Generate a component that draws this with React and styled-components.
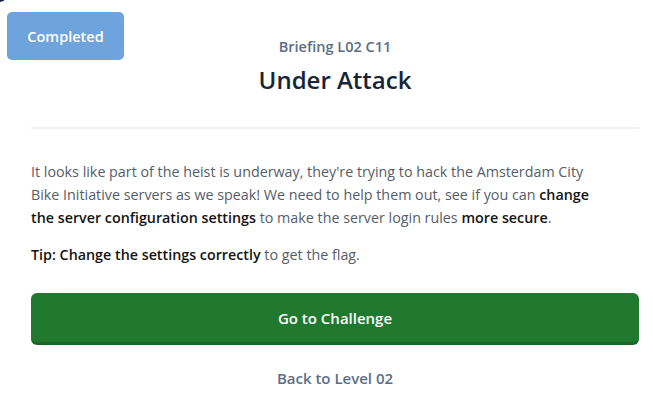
import styled, { createGlobalStyle } from 'styled-components';

const GlobalStyle = createGlobalStyle`
  body {
    margin: 0;
    background: #ffffff;
    font-family: "Open Sans", Lato, sans-serif;
  }
`;

const Page = styled.div`
  position: relative;
  width: 653px;
  height: 411px;
  overflow: hidden;
  background: #ffffff;
`;

const Corner = styled.div`
  position: absolute;
  top: -6px;
  left: -4px;
  width: 10px;
  height: 8px;
  border-radius: 0 0 6px 0;
  background: #1b2a3c;
`;

const CompletedBadge = styled.div`
  position: absolute;
  top: 12px;
  left: 7px;
  display: flex;
  align-items: center;
  justify-content: center;

  width: 117px;
  height: 48px;
  border-radius: 5px;

  background: #6fa3dc;
  color: #ffffff;

  font-size: 14.5px;
  font-weight: 600;
`;

const Content = styled.div`
  display: flex;
  flex-direction: column;
  padding: 37px 14px 0 31px;
`;

const Header = styled.header`
  display: flex;
  flex-direction: column;
  align-items: center;
  gap: 8px;

  padding-bottom: 32px;
  border-bottom: 2px solid #eef1f5;
`;

const Eyebrow = styled.div`
  color: #5b6e86;
  font-size: 14.5px;
  font-weight: 600;
  line-height: 20px;
`;

const Title = styled.h1`
  margin: 0;
  color: #17253a;
  font-size: 24px;
  font-weight: 600;
  line-height: 30px;
`;

const Paragraph = styled.p`
  margin: 0;
  color: #555d69;
  font-size: 14.3px;
  line-height: 23px;

  & > strong {
    color: #141414;
    font-weight: 600;
  }
`;

const Intro = styled(Paragraph)`
  margin-top: 31px;
`;

const Tip = styled(Paragraph)`
  margin-top: 14px;
`;

const ChallengeButton = styled.button`
  display: flex;
  align-items: center;
  justify-content: center;

  height: 52px;
  margin-top: 27px;
  padding: 0;
  border: none;
  border-bottom: 3px solid #1b6729;
  border-radius: 6px;

  background: #21792f;
  color: #ffffff;

  font-family: inherit;
  font-size: 15px;
  font-weight: 600;
`;

const BackLink = styled.a`
  align-self: center;
  margin-top: 23px;

  color: #5b6e86;
  font-size: 15px;
  font-weight: 600;
  line-height: 20px;
  text-decoration: none;
`;

export default function App() {
  return (
    <Page>
      <GlobalStyle />
      <Corner />
      <CompletedBadge>Completed</CompletedBadge>
      <Content>
        <Header>
          <Eyebrow>Briefing L02 C11</Eyebrow>
          <Title>Under Attack</Title>
        </Header>
        <Intro>
          It looks like part of the heist is underway, they're trying to hack
          the Amsterdam City
          <br />
          Bike Initiative servers as we speak! We need to help them out, see if
          you can <strong>change</strong>
          <br />
          <strong>the server configuration settings</strong> to make the server
          login rules <strong>more secure</strong>.
        </Intro>
        <Tip>
          <strong>Tip: Change the settings correctly</strong> to get the flag.
        </Tip>
        <ChallengeButton>Go to Challenge</ChallengeButton>
        <BackLink href="#">Back to Level 02</BackLink>
      </Content>
    </Page>
  );
}
